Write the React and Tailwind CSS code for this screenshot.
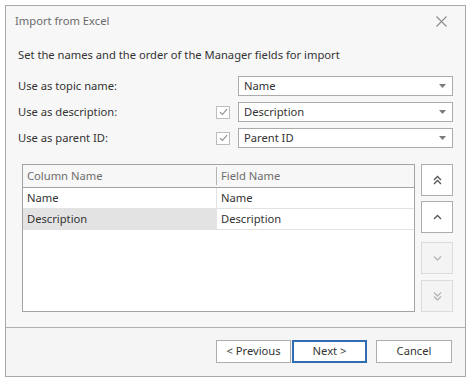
import React from "react";

const font = { fontFamily: '"Noto Sans", "Open Sans", sans-serif' };

function Caret() {
  return (
    <svg width="7" height="4" viewBox="0 0 7 4" className="shrink-0">
      <path d="M0 0 L7 0 L3.5 4 Z" fill="#7a7a7a" />
    </svg>
  );
}

function Check() {
  return (
    <div className="w-[14px] h-[13px] border border-[#bdbdbd] bg-white flex items-center justify-center">
      <svg width="9" height="8" viewBox="0 0 9 8">
        <path d="M1 4.2 L3.4 6.5 L8 1.2" fill="none" stroke="#8a8a8a" strokeWidth="1.1" />
      </svg>
    </div>
  );
}

function Select({ value }) {
  return (
    <div className="w-[215px] h-[20px] border border-[#ababab] bg-white flex items-center justify-between pl-[5px] pr-[6px] text-[11.2px] text-[#333]">
      <span className="leading-[18px]">{value}</span>
      <Caret />
    </div>
  );
}

function Row({ label, check, value }) {
  return (
    <div className="flex items-center h-[20px]">
      <div className="w-[198px] text-[11.2px] text-[#333] leading-[16px]">{label}</div>
      <div className="w-[22px]">{check ? <Check /> : null}</div>
      <Select value={value} />
    </div>
  );
}

function SideBtn({ enabled, className, children }) {
  return (
    <div
      className={
        "w-[32px] h-[32px] border flex items-center justify-center " +
        (enabled ? "bg-white border-[#adadad] " : "bg-[#f4f4f4] border-[#dcdcdc] ") +
        (className || "")
      }
    >
      {children}
    </div>
  );
}

function Chev({ dir, double, color }) {
  const up = dir === "up";
  const p1 = up ? "M1 5 L4.5 1.5 L8 5" : "M1 1.5 L4.5 5 L8 1.5";
  const p2 = up ? "M1 9 L4.5 5.5 L8 9" : "M1 5.5 L4.5 9 L8 5.5";
  return (
    <svg width="9" height={double ? 10 : 6.5} viewBox={double ? "0 0 9 10" : "0 0 9 6.5"}>
      <path d={p1} fill="none" stroke={color} strokeWidth="1.3" />
      {double ? <path d={p2} fill="none" stroke={color} strokeWidth="1.3" /> : null}
    </svg>
  );
}

export default function App() {
  return (
    <div className="w-[473px] h-[383px] bg-white pt-[5px] pl-[5px]" style={font}>
      <div className="w-[461px] h-[372px] border border-[#a9a9a9] bg-[#f7f7f7] flex flex-col">
        <div className="h-[30px] flex items-center justify-between pl-[9px] pr-[18px]">
          <span className="text-[11.2px] text-[#6b6b6b] leading-[16px]">Import from Excel</span>
          <svg width="11" height="11" viewBox="0 0 11 11">
            <path d="M0.5 0.5 L10.5 10.5 M10.5 0.5 L0.5 10.5" stroke="#8c8c8c" strokeWidth="1.1" />
          </svg>
        </div>
        <div className="mt-[11px] pl-[12px] h-[16px] text-[11.2px] leading-[16px] text-[#333]">
          Set the names and the order of the Manager fields for import
        </div>
        <div className="mt-[13px] pl-[12px] flex flex-col gap-[6px]">
          <Row label="Use as topic name:" check={false} value="Name" />
          <Row label="Use as description:" check value="Description" />
          <Row label="Use as parent ID:" check value="Parent ID" />
        </div>
        <div className="mt-[16px] pl-[16px] flex gap-[6px]">
          <div className="w-[393px] h-[148px] border border-[#a3a3a3] bg-white flex flex-col text-[11.2px]">
            <div className="h-[23px] flex bg-[#f7f7f7] border-b border-[#a3a3a3] text-[#6d6d6d]">
              <div className="w-[194px] flex items-center pl-[4px] border-r border-[#b5b5b5] my-[2px]">Column Name</div>
              <div className="flex-1 flex items-center pl-[4px]">Field Name</div>
            </div>
            <div className="h-[21px] flex border-b border-[#e2e2e2] text-[#333]">
              <div className="w-[194px] flex items-center pl-[4px] border-r border-[#e2e2e2]">Name</div>
              <div className="flex-1 flex items-center pl-[4px]">Name</div>
            </div>
            <div className="h-[21px] flex border-b border-[#e2e2e2] text-[#333]">
              <div className="w-[194px] flex items-center pl-[4px] border-r border-[#e2e2e2] bg-[#e3e3e3]">Description</div>
              <div className="flex-1 flex items-center pl-[4px]">Description</div>
            </div>
          </div>
          <div className="flex flex-col">
            <SideBtn enabled>
              <Chev dir="up" double color="#555" />
            </SideBtn>
            <SideBtn enabled className="mt-[5px]">
              <Chev dir="up" color="#555" />
            </SideBtn>
            <SideBtn className="mt-[9px]">
              <Chev dir="down" color="#b5b5b5" />
            </SideBtn>
            <SideBtn className="mt-[6px]">
              <Chev dir="down" double color="#b5b5b5" />
            </SideBtn>
          </div>
        </div>
        <div className="flex-1" />
        <div className="h-[49px] border-t border-[#b0b0b0] bg-[#f5f5f5] flex justify-end items-start pt-[12px] pr-[13px] text-[11.2px] text-[#333]">
          <div className="w-[75px] h-[23px] border border-[#adadad] bg-white flex items-center justify-center">&lt; Previous</div>
          <div className="ml-[1px] w-[75px] h-[23px] border-2 border-[#2e6db3] bg-white flex items-center justify-center">Next &gt;</div>
          <div className="ml-[9px] w-[76px] h-[23px] border border-[#adadad] bg-white flex items-center justify-center">Cancel</div>
        </div>
      </div>
    </div>
  );
}
